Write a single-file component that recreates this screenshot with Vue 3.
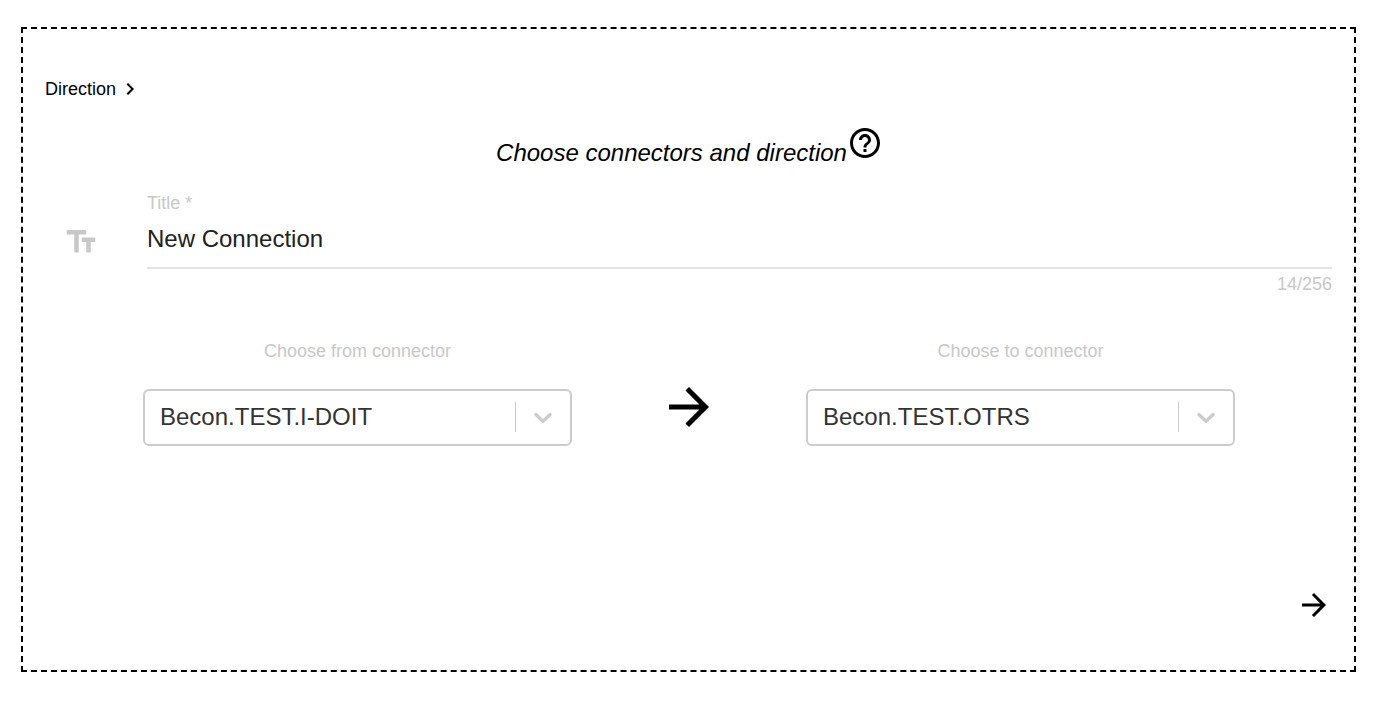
<script setup>
import { computed, ref } from 'vue'

const maxLength = 256
const title = ref('New Connection')
const counter = computed(() => `${title.value.length}/${maxLength}`)

const connectors = ['Becon.TEST.I-DOIT', 'Becon.TEST.OTRS']
const from = ref(connectors[0])
const to = ref(connectors[1])

const arrowPath = 'M12 4l-1.41 1.41L16.17 11H4v2h12.17l-5.58 5.59L12 20l8-8z'
const caretPath =
  'M4.516 7.548c0.436-0.446 1.043-0.481 1.576 0l3.908 3.747 3.908-3.747c0.533-0.481 1.141-0.446 1.574 0 0.436 0.445 0.408 1.197 0 1.615-0.406 0.418-4.695 4.502-4.695 4.502-0.217 0.223-0.502 0.335-0.787 0.335s-0.57-0.112-0.789-0.335c0 0-4.287-4.084-4.695-4.502s-0.436-1.17 0-1.615z'
</script>

<template>
  <main class="card">
    <nav class="steps" aria-label="Steps">
      <span>Direction</span>
      <svg class="icon-s" viewBox="0 0 24 24" aria-hidden="true">
        <path d="M10 6L8.59 7.41 13.17 12l-4.58 4.59L10 18l6-6z" />
      </svg>
    </nav>

    <header class="heading">
      <h1>Choose connectors and direction</h1>
      <button type="button" class="help" aria-label="Help">
        <svg class="icon-m" viewBox="0 0 24 24" aria-hidden="true">
          <path d="M11 18h2v-2h-2v2zm1-16C6.48 2 2 6.48 2 12s4.48 10 10 10 10-4.48 10-10S17.52 2 12 2zm0 18c-4.41 0-8-3.59-8-8s3.59-8 8-8 8 3.59 8 8-3.59 8-8 8zm0-14c-2.21 0-4 1.79-4 4h2c0-1.1.9-2 2-2s2 .9 2 2c0 2-3 1.75-3 5h2c0-2.25 3-2.5 3-5 0-2.21-1.79-4-4-4z" />
        </svg>
      </button>
    </header>

    <div class="title-row">
      <svg class="icon-m title-icon" viewBox="0 0 24 24" aria-hidden="true">
        <path d="M2.5 4v3h5v12h3V7h5V4h-13zm19 5h-9v3h3v7h3v-7h3V9z" />
      </svg>
      <div class="field">
        <label for="title">Title *</label>
        <input id="title" v-model="title" type="text" :maxlength="maxLength" required />
        <span class="counter">{{ counter }}</span>
      </div>
    </div>

    <div class="connectors">
      <div class="connector">
        <label for="from">Choose from connector</label>
        <div class="select">
          <select id="from" v-model="from">
            <option v-for="c in connectors" :key="c">{{ c }}</option>
          </select>
          <span class="caret">
            <svg viewBox="0 0 20 20" aria-hidden="true"><path :d="caretPath" /></svg>
          </span>
        </div>
      </div>
      <svg class="icon-l" viewBox="0 0 24 24" aria-hidden="true"><path :d="arrowPath" /></svg>
      <div class="connector">
        <label for="to">Choose to connector</label>
        <div class="select">
          <select id="to" v-model="to">
            <option v-for="c in connectors" :key="c">{{ c }}</option>
          </select>
          <span class="caret">
            <svg viewBox="0 0 20 20" aria-hidden="true"><path :d="caretPath" /></svg>
          </span>
        </div>
      </div>
    </div>

    <footer class="actions">
      <button type="button" aria-label="Next">
        <svg class="icon-m" viewBox="0 0 24 24" aria-hidden="true"><path :d="arrowPath" /></svg>
      </button>
    </footer>
  </main>
</template>

<style>
body {
  background: #fff;
}
#app {
  display: flow-root;
}
</style>

<style scoped>
.card {
  margin: 27px 23px 29px 21px;
  padding: 48px 22px 47px;
  border: 2px dashed #000;
  font-family: "Liberation Sans", Arial, sans-serif;
  font-size: 18px;
  line-height: 24px;
  color: #000;
}
svg {
  display: block;
  flex: none;
  fill: currentColor;
}
button {
  display: block;
  padding: 0;
  border: 0;
  background: none;
  color: inherit;
  cursor: pointer;
}
.icon-s {
  width: 24px;
  height: 24px;
}
.icon-m {
  width: 36px;
  height: 36px;
}
.icon-l {
  width: 60px;
  height: 60px;
}
.steps {
  display: flex;
  align-items: center;
  gap: 2px;
}
.heading {
  display: flex;
  justify-content: center;
  align-items: flex-start;
  margin-top: 24px;
  padding-left: 2px;
}
h1 {
  margin: 14px 0 0;
  font-size: 24px;
  font-style: italic;
  font-weight: 400;
  line-height: 28px;
}
.title-row {
  display: flex;
  align-items: flex-start;
  margin-top: 24px;
}
.title-icon {
  margin: 33px 48px 0 18px;
  color: #c8c8c8;
}
.field {
  display: flex;
  flex: 1;
  flex-direction: column;
}
.field label,
.counter,
.connector label {
  color: #c8c8c8;
}
input {
  box-sizing: border-box;
  width: 100%;
  height: 54px;
  padding: 0 0 4px;
  border: 0;
  border-bottom: 2px solid #e4e4e4;
  outline: 0;
  background: none;
  color: #212121;
  font: 24px "Liberation Sans", Arial, sans-serif;
}
.counter {
  align-self: flex-end;
  margin-top: 3px;
}
.connectors {
  display: grid;
  grid-template-columns: 11fr 6fr 11fr;
  margin: 43px 97px 0 98px;
}
.connectors > .icon-l {
  margin-top: 38px;
  justify-self: center;
}
.connector label {
  display: block;
  margin-bottom: 26px;
  text-align: center;
}
.select {
  position: relative;
}
select {
  box-sizing: border-box;
  display: block;
  width: 100%;
  height: 57px;
  padding: 0 60px 2px 15px;
  appearance: none;
  border: 2px solid #ccc;
  border-radius: 6px;
  outline: 0;
  background: #fff;
  color: #333;
  font: 24px "Liberation Sans", Arial, sans-serif;
}
.caret {
  position: absolute;
  top: 13px;
  right: 14px;
  padding-left: 12px;
  border-left: 1px solid #ccc;
  color: #ccc;
  pointer-events: none;
}
.caret svg {
  width: 30px;
  height: 30px;
}
.actions {
  display: flex;
  justify-content: flex-end;
  margin-top: 141px;
}
</style>
